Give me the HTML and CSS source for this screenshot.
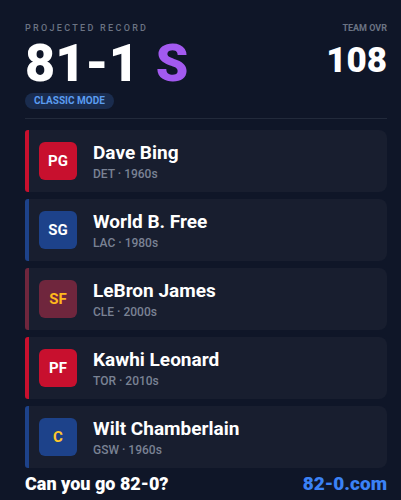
FILE: index.html
```html
<!DOCTYPE html>
<html lang="en">
<head>
    <meta name="viewport" content="width=device-width, initial-scale=1.0" charset="UTF-8">
    <title>82-0 Projected Record</title>
    <link rel="stylesheet" href="styles.css">
</head>
<body>
    <div class="container">
        <!-- record + overall -->
        <header class="summary">
            <div class="record">
                <p class="label spaced">PROJECTED RECORD</p>
                <h1 class="record-value">81-1 <span class="grade">S</span></h1>
                <span class="mode">CLASSIC MODE</span>
            </div>
            <div class="ovr">
                <p class="label">TEAM OVR</p>
                <p class="ovr-value">108</p>
            </div>
        </header>

        <!-- lineup -->
        <ul class="lineup">
            <li class="player red">
                <div class="pos pos-red">PG</div>
                <div class="info">
                    <h3>Dave Bing</h3>
                    <p>DET · 1960s</p>
                </div>
            </li>
            <li class="player blue">
                <div class="pos pos-blue">SG</div>
                <div class="info">
                    <h3>World B. Free</h3>
                    <p>LAC · 1980s</p>
                </div>
            </li>
            <li class="player wine">
                <div class="pos pos-wine">SF</div>
                <div class="info">
                    <h3>LeBron James</h3>
                    <p>CLE · 2000s</p>
                </div>
            </li>
            <li class="player red">
                <div class="pos pos-red">PF</div>
                <div class="info">
                    <h3>Kawhi Leonard</h3>
                    <p>TOR · 2010s</p>
                </div>
            </li>
            <li class="player blue">
                <div class="pos pos-gold">C</div>
                <div class="info">
                    <h3>Wilt Chamberlain</h3>
                    <p>GSW · 1960s</p>
                </div>
            </li>
        </ul>

        <footer class="footer">
            <span class="cta">Can you go 82-0?</span>
            <span class="site">82-0.com</span>
        </footer>
    </div>
</body>
</html>
```

FILE: styles.css
```css
body {
    margin: 0;
    background-color: #0f1628;
    font-family: 'Roboto', 'Liberation Sans', sans-serif;
    color: #ffffff;
}

.container {
    padding: 23px 14px 0 25px;
}

/* top part */
.summary {
    display: flex;
    justify-content: space-between;
    padding-bottom: 9px;
    border-bottom: 1px solid #222a3b;
}

.record {
    display: flex;
    flex-direction: column;
    align-items: flex-start;
}

.label {
    margin: 0;
    font-size: 9px;
    line-height: 11px;
    font-weight: 700;
    color: #6b7383;
}

.label.spaced {
    letter-spacing: 2.3px;
    font-weight: 500;
}

.record-value {
    margin: 2px 0 0 0;
    font-size: 52px;
    font-weight: 900;
    line-height: 56px;
}

.grade {
    margin-left: 4px;
    color: #a35af0;
}

.mode {
    margin-top: 1px;
    padding: 3px 9px;
    font-size: 10px;
    line-height: 10px;
    font-weight: 700;
    color: #5b9cf0;
    background-color: #1a2c4e;
    border-radius: 8px;
}

.ovr {
    text-align: right;
}

.ovr-value {
    margin: 9px 0 0 0;
    font-size: 35px;
    font-weight: 900;
    line-height: 36px;
}

/* cards */
.lineup {
    list-style: none;
    margin: 11px 0 0 0;
    padding: 0;
    display: flex;
    flex-direction: column;
    gap: 7px;
}

.player {
    display: flex;
    align-items: center;
    gap: 16px;
    height: 62px;
    padding-left: 10px;
    background-color: #181e2f;
    border-left: 4px solid #c8102e;
    border-radius: 3px 8px 8px 3px;
}

.player.blue { border-left-color: #1d428a; }
.player.wine { border-left-color: #6f263d; }
.player.red { border-left-color: #c8102e; }

.pos {
    width: 38px;
    height: 38px;
    border-radius: 6px;
    display: flex;
    align-items: center;
    justify-content: center;
    font-size: 15px;
    font-weight: 700;
    color: #ffffff;
}

.pos-red { background-color: #c8102e; }
.pos-blue { background-color: #1d428a; }
.pos-wine { background-color: #6f263d; color: #ffb81c; }
.pos-gold { background-color: #1d428a; color: #ffc72c; }

.info h3 {
    margin: 0;
    font-size: 19px;
    font-weight: 700;
    line-height: 22px;
}

.info p {
    margin: 3px 0 0 0;
    font-size: 12px;
    font-weight: 500;
    color: #7a8294;
}

/* bottom line */
.footer {
    display: flex;
    justify-content: space-between;
    align-items: baseline;
    margin-top: 4px;
    line-height: 24px;
    font-weight: 900;
}

.cta {
    font-size: 18px;
}

.site {
    font-size: 19px;
    color: #3b82f6;
}
```
